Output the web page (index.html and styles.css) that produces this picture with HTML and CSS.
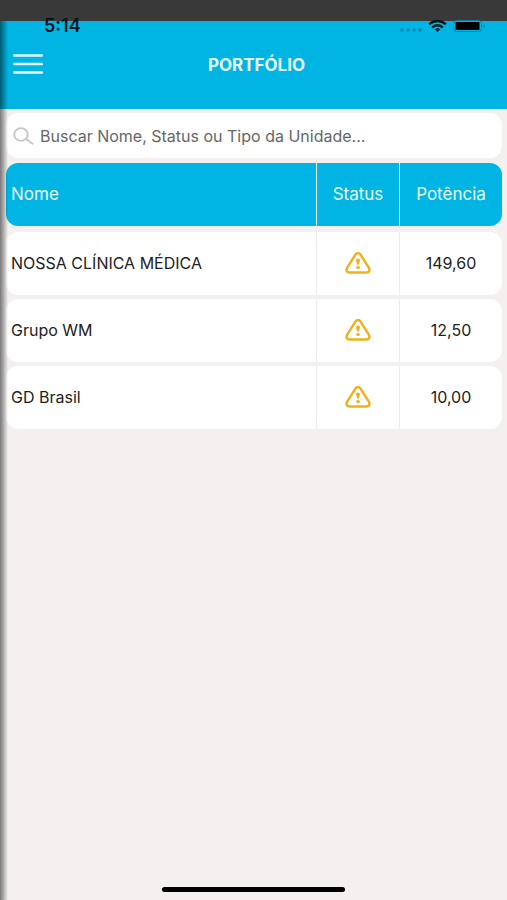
FILE: index.html
```html
<!DOCTYPE html>
<html lang="pt-BR">
<head>
    <meta charset="UTF-8">
    <meta name="viewport" content="width=device-width, initial-scale=1.0">
    <title>Portfólio</title>
    <link rel="stylesheet" href="styles.css">
</head>
<body>
    <div class="top-strip"></div>
    <header class="header">
        <div class="status-bar">
            <span class="time">5:14</span>
            <svg class="status-icons" width="87" height="14" viewBox="0 0 87 14" aria-hidden="true">
                <g fill="#0588ad">
                    <circle cx="3" cy="9" r="1.8"/>
                    <circle cx="9" cy="9" r="1.8"/>
                    <circle cx="15" cy="9" r="1.8"/>
                    <circle cx="21" cy="9" r="1.8"/>
                </g>
                <g fill="none" stroke="#04161c" stroke-width="2.4">
                    <path d="M30 3.2Q38.5 -3 47 3.2"/>
                    <path d="M33.2 6.4Q38.5 2.2 43.8 6.4"/>
                </g>
                <path d="M35.7 8.2Q38.5 6.3 41.3 8.2L38.5 11Z" fill="#04161c"/>
                <rect x="54.5" y="-0.5" width="28" height="11" rx="3" fill="none" stroke="#087fa0"/>
                <rect x="56.5" y="1" width="24" height="8" rx="1" fill="#000"/>
                <path d="M84.5 3.2Q87 5 84.5 6.8Z" fill="#066784"/>
            </svg>
        </div>
        <div class="nav">
            <button class="menu-btn" type="button" aria-label="Abrir menu">
                <svg width="30" height="22" viewBox="0 0 30 22" aria-hidden="true">
                    <path d="M1 1.5H29M1 10H29M1 18.5H29" stroke="#e9faff" stroke-width="2.4" stroke-linecap="round"/>
                </svg>
            </button>
            <h1 class="title">PORTFÓLIO</h1>
        </div>
    </header>

    <main class="content">
        <label class="search">
            <svg width="21" height="18" viewBox="0 0 21 18" aria-hidden="true">
                <g fill="none" stroke="#c4c4c4" stroke-width="1.8" stroke-linecap="round">
                    <ellipse cx="8" cy="7.5" rx="6.8" ry="6.3"/>
                    <path d="M13 12L19.5 16.8"/>
                </g>
            </svg>
            <input type="text" class="search-input" aria-label="Buscar" placeholder="Buscar Nome, Status ou Tipo da Unidade...">
        </label>

        <table class="units">
            <thead>
                <tr>
                    <th scope="col">Nome</th>
                    <th scope="col">Status</th>
                    <th scope="col">Potência</th>
                </tr>
            </thead>
            <tbody>
                <tr>
                    <td>NOSSA CLÍNICA MÉDICA</td>
                    <td><svg class="warning" viewBox="0 0 26 22" role="img" aria-label="Alerta"><use href="#warning"/></svg></td>
                    <td>149,60</td>
                </tr>
                <tr>
                    <td>Grupo WM</td>
                    <td><svg class="warning" viewBox="0 0 26 22" role="img" aria-label="Alerta"><use href="#warning"/></svg></td>
                    <td>12,50</td>
                </tr>
                <tr>
                    <td>GD Brasil</td>
                    <td><svg class="warning" viewBox="0 0 26 22" role="img" aria-label="Alerta"><use href="#warning"/></svg></td>
                    <td>10,00</td>
                </tr>
            </tbody>
        </table>
    </main>

    <div class="home-indicator"></div>
    <div class="edge-shadow"></div>

    <svg class="sprite" aria-hidden="true">
        <symbol id="warning" viewBox="0 0 26 22">
            <path d="M10.6 2.4Q13 -0.2 15.4 2.4L23.8 15.6Q25.8 20.2 21.3 20.4H4.7Q0.2 20.2 2.2 15.6Z" fill="none" stroke="#efb21c" stroke-width="2.5" stroke-linejoin="round"/>
            <path d="M11 8.4Q11 6.4 13 6.4T15 8.4L13.7 12.8H12.3Z" fill="#efb21c"/>
            <ellipse cx="13" cy="15.5" rx="1.9" ry="1.6" fill="#efb21c"/>
        </symbol>
    </svg>
</body>
</html>
```

FILE: styles.css
```css
/* General Body Styles */
* {
    box-sizing: border-box;
}

body {
    margin: 0;
    min-height: 100vh;
    display: flex;
    flex-direction: column;
    font-family: Inter, "Liberation Sans", sans-serif;
    font-size: 16px;
    line-height: 20px;
    color: #222222;
    background: #f3f0ef;
}

/* Header */
.top-strip {
    height: 21px;
    background: #393939;
}

.header {
    height: 88px;
    background: #00b5e3;
}

.status-bar {
    display: flex;
    justify-content: space-between;
    height: 14px;
    padding: 0 21px 0 44px;
}

.status-icons {
    overflow: visible;
}

.time {
    font-size: 18px;
    font-weight: 600;
    line-height: 10px;
    color: #04161c;
}

.nav {
    display: grid;
    grid-template-columns: 1fr auto 1fr;
    align-items: center;
    height: 60px;
    padding: 0 13px;
}

.menu-btn {
    display: flex;
    justify-self: start;
    padding: 0;
    border: none;
    background: none;
    cursor: pointer;
}

.title {
    margin: 0;
    padding-left: 6px;
    font-size: 17px;
    font-weight: 700;
    color: #e9faff;
}

/* Search */
.content {
    flex: 1;
    padding: 4px 5px 0 6px;
}

.search {
    display: flex;
    align-items: center;
    gap: 6px;
    height: 45px;
    margin-bottom: 5px;
    padding: 0 7px;
    border-radius: 12px;
    background: #ffffff;
}

.search-input {
    flex: 1;
    min-width: 0;
    padding: 0;
    border: none;
    outline: none;
    font: inherit;
    background: none;
}

.search-input::placeholder {
    color: #666666;
    opacity: 1;
}

/* Units Table */
.units,
.units thead {
    display: block;
}

.units thead {
    margin-bottom: 6px;
}

.units tbody {
    display: grid;
    gap: 4px;
}

.units tr {
    display: grid;
    grid-template-columns: 1fr 83px 103px;
    height: 63px;
    border-radius: 12px;
    overflow: hidden;
    background: #ffffff;
}

.units th,
.units td {
    display: flex;
    align-items: center;
    justify-content: center;
    padding: 0 5px 2px;
}

.units th:first-child,
.units td:first-child {
    justify-content: flex-start;
}

.units thead tr {
    background: #00b5e3;
}

.units th {
    font-size: 17px;
    font-weight: 400;
    color: #e9faff;
}

.units th + th {
    border-left: 1px solid #e9faff;
}

.units td + td {
    border-left: 1px solid #efecec;
}

.warning {
    width: 26px;
    height: 22px;
}

.sprite {
    display: none;
}

/* Screen Edges */
.home-indicator {
    width: 36%;
    height: 5px;
    margin: 0 auto 8px;
    border-radius: 3px;
    background: #000000;
}

.edge-shadow {
    position: absolute;
    top: 21px;
    bottom: 0;
    left: 0;
    width: 8px;
    background: linear-gradient(to right, rgba(0, 0, 0, 0.5), rgba(0, 0, 0, 0));
    pointer-events: none;
}
```
